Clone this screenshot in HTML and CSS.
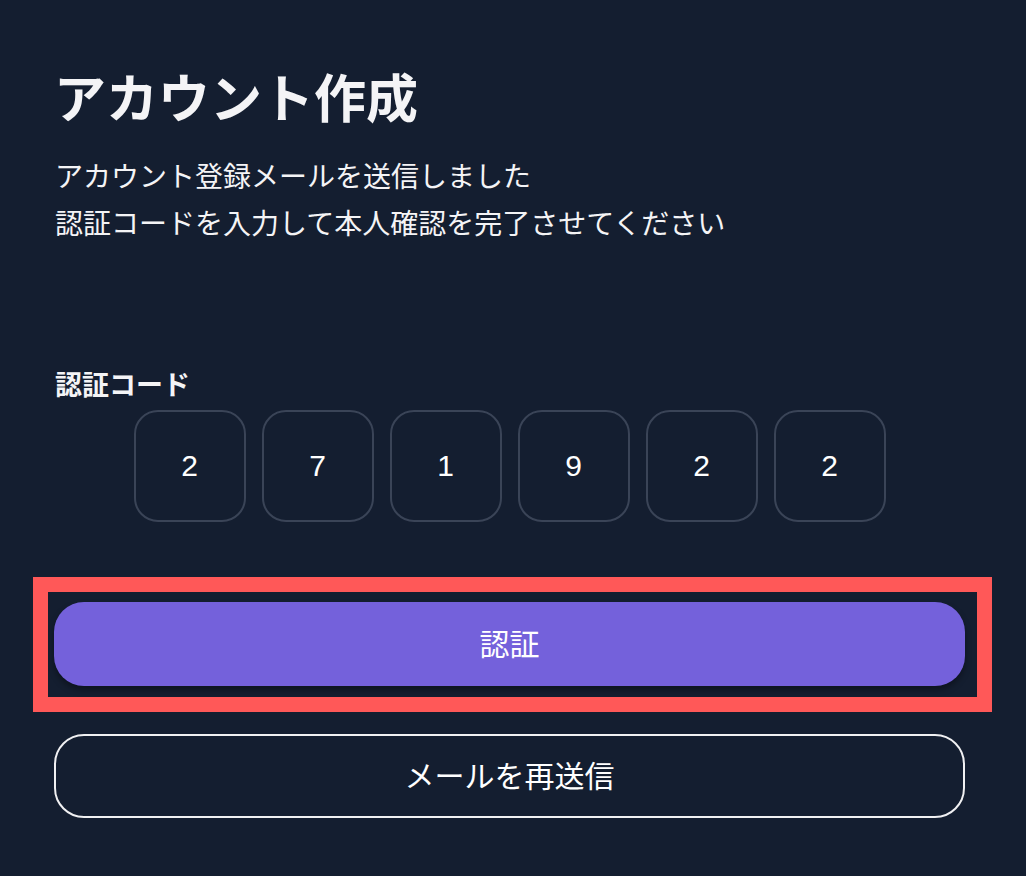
FILE: index.html
```html
<!DOCTYPE html>
<html lang="ja">
<head>
    <meta charset="UTF-8">
    <meta name="viewport" content="width=device-width, initial-scale=1.0">
    <title>アカウント作成</title>
    <link rel="stylesheet" href="styles.css">
</head>
<body>
    <div class="container">
        <h1 class="title">アカウント作成</h1>
        <p class="lead">アカウント登録メールを送信しました<br>認証コードを入力して本人確認を完了させてください</p>

        <div class="field-label">認証コード</div>
        <div class="code-row">
            <div class="code-box">2</div>
            <div class="code-box">7</div>
            <div class="code-box">1</div>
            <div class="code-box">9</div>
            <div class="code-box">2</div>
            <div class="code-box">2</div>
        </div>

        <div class="highlight">
            <button class="btn btn-primary">認証</button>
        </div>
        <button class="btn btn-outline">メールを再送信</button>
    </div>
</body>
</html>
```

FILE: styles.css
```css
body {
    margin: 0;
    background-color: #141e30;
    color: #f4f4f6;
    font-family: "Noto Sans CJK JP", "Noto Sans", sans-serif;
}

.container {
    width: 911px;
    padding: 65px 0 0 54px;
}

.title {
    margin: 0;
    font-size: 52px;
    line-height: 62px;
    font-weight: 700;
}

.lead {
    margin: 25px 0 0 1px;
    font-size: 28px;
    line-height: 47px;
    font-weight: 400;
}

.field-label {
    margin: 118px 0 0 1px;
    font-size: 27px;
    line-height: 40px;
    font-weight: 700;
}

.code-row {
    display: flex;
    justify-content: center;
    gap: 16px;
    margin-top: 6px;
}

.code-box {
    width: 112px;
    height: 112px;
    box-sizing: border-box;
    border: 2px solid #3a4457;
    border-radius: 24px;
    display: flex;
    align-items: center;
    justify-content: center;
    font-family: "Liberation Sans", Arial, sans-serif;
    font-size: 30px;
    color: #ffffff;
}

.highlight {
    margin: 55px -27px 0 -21px;
    border: 15px solid #ff5858;
    padding: 10px 12px 11px 6px;
}

.btn {
    display: block;
    width: 911px;
    height: 84px;
    padding: 0 0 5px;
    border-radius: 30px;
    font-family: "Noto Sans CJK JP", sans-serif;
    font-size: 30px;
    color: #ffffff;
    cursor: pointer;
}

.btn-primary {
    background-color: #7461db;
    border: none;
    box-shadow: 0 4px 6px rgba(0, 0, 0, 0.35);
}

.btn-outline {
    margin-top: 22px;
    background-color: transparent;
    border: 2px solid #f0f0f2;
}
```
